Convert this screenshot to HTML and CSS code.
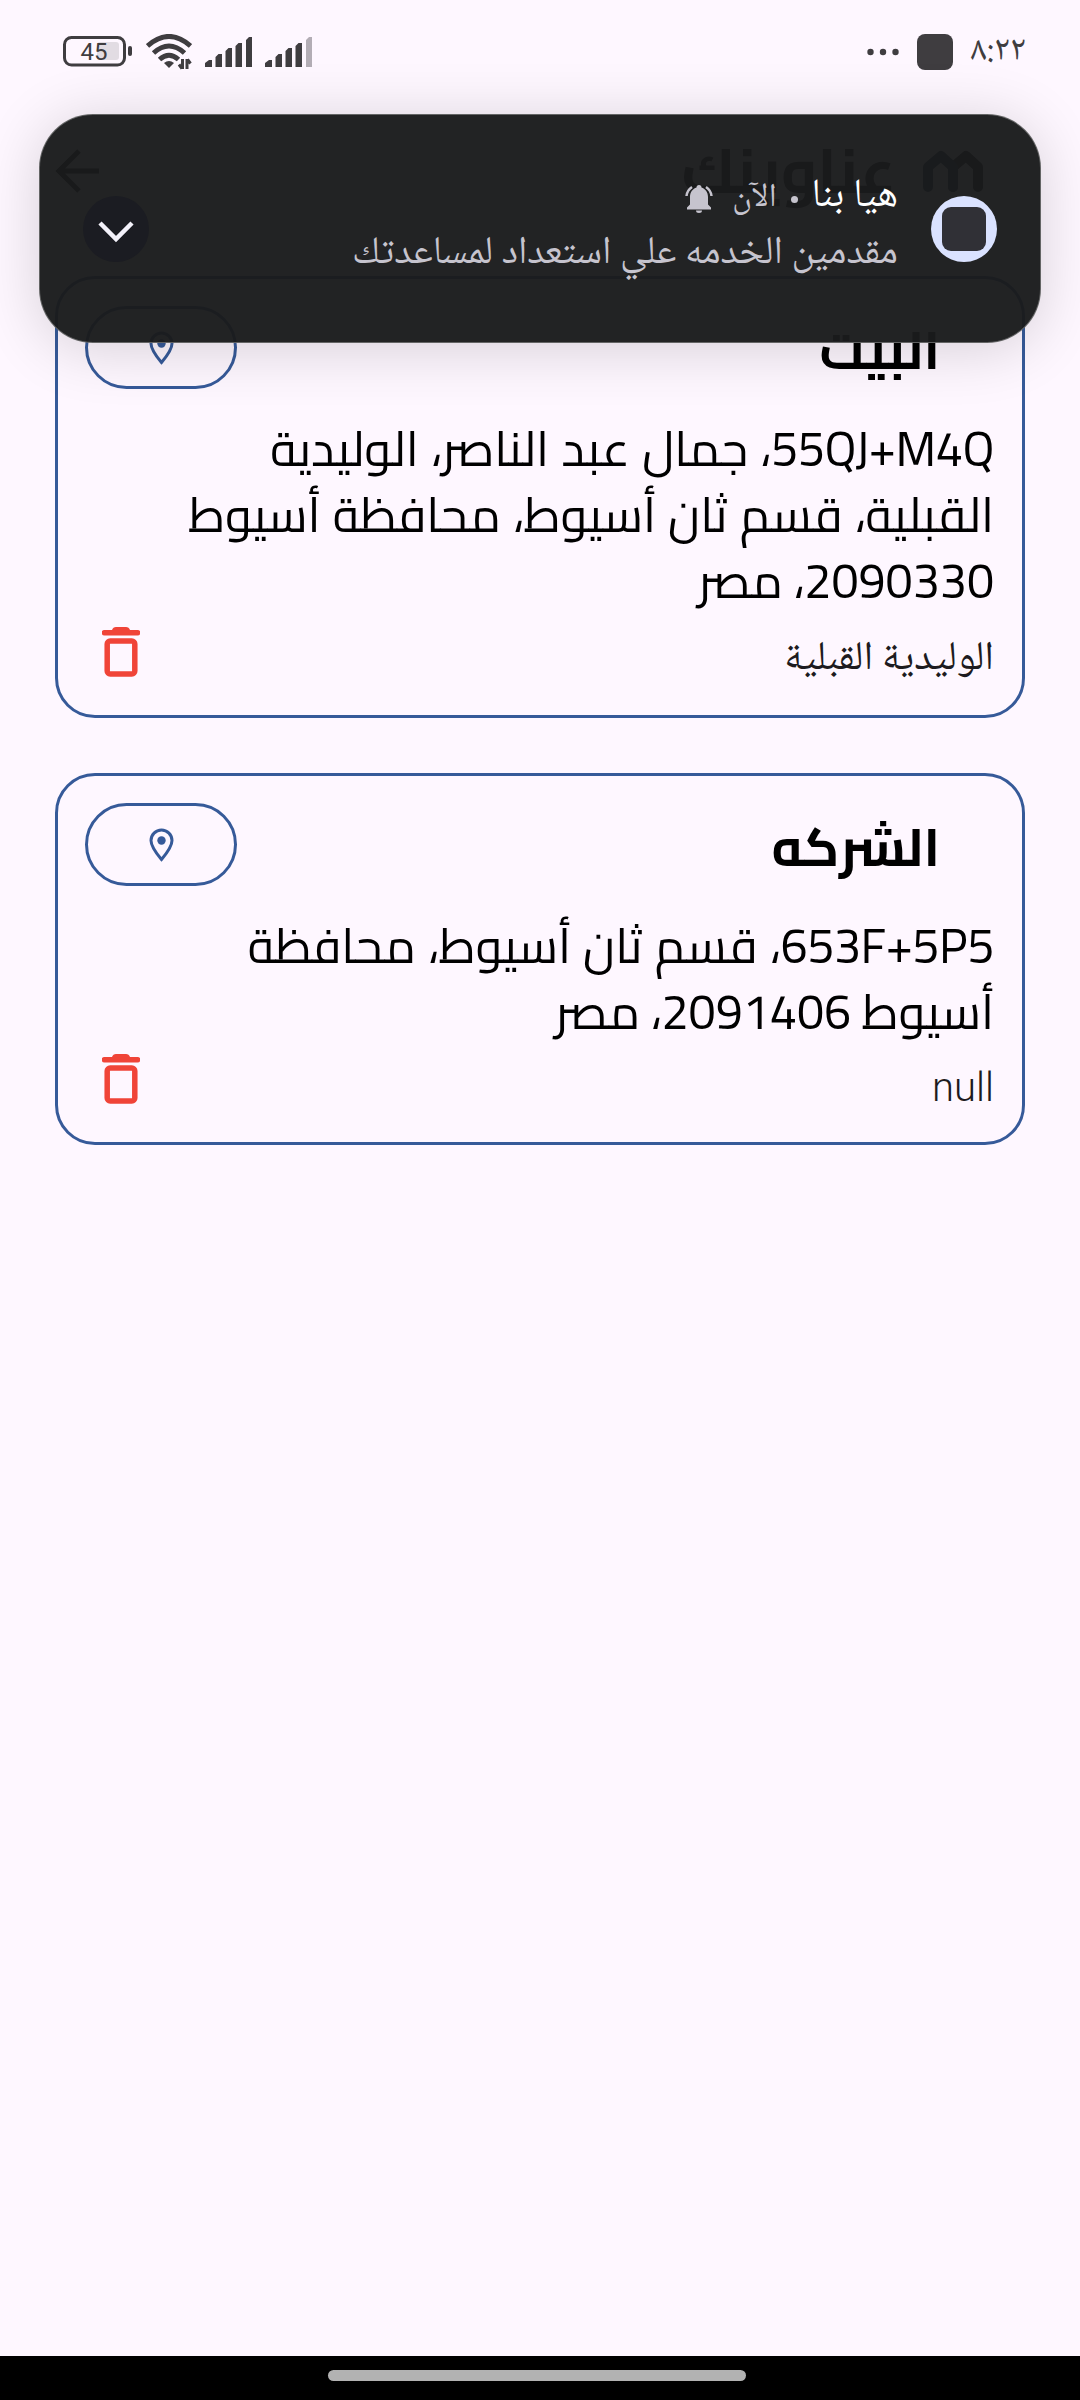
FILE: index.html
```html
<!DOCTYPE html>
<html lang="ar">
<head>
<meta charset="utf-8">
<title>عناوينك</title>
<link rel="stylesheet" href="styles.css">
</head>
<body>
<div class="screen">
  <header class="status">
    <div class="status-side">
      <svg class="battery" width="70" height="32" viewBox="0 0 70 32"><rect x="1.500" y="1.500" width="60" height="27.500" rx="7" fill="none" stroke="#3f3d40" stroke-width="3"/><rect x="34" y="6" width="22" height="18" rx="3" fill="#e2dce3"/><rect x="65" y="10" width="4" height="10" rx="2" fill="#3f3d40"/><text x="31" y="23.500" text-anchor="middle">45</text></svg>
      <svg class="wifi" width="46" height="36" viewBox="0 0 46 36" fill="none" stroke="#3f3d40" stroke-width="5"><path d="M1.500 12Q23-7 44.500 12M7.500 19Q23 5 38.500 19M13.500 25.500Q23 17 32.500 25.500"/><path d="M18 29Q23 25 28 29L23 34z" fill="#3f3d40" stroke="none"/><path d="M36.500 25v10M41 25v10M33 30.500l3 4M44.500 29.500l-3-4" stroke-width="3"/></svg>
      <svg class="signal" width="48" height="31" viewBox="0 0 48 31" fill="#3f3d40"><path d="M0 31v-4l4-3h3v7zM10.500 31V21l3-3H17v13zM20.500 31V15l3-3H27v19zM30.500 31V10l3-3H37v24zM41 31V4l3-3h3v30z"/></svg>
      <svg class="signal" width="48" height="31" viewBox="0 0 48 31" fill="#3f3d40"><path d="M0 31v-4l4-3h3v7zM10.500 31V21l3-3H17v13zM20.500 31V15l3-3H27v19zM30.500 31V10l3-3H37v24z"/><path d="M41 31V4l3-3h3v30z" fill="#b3adb5"/></svg>
    </div>
    <div class="status-side status-end">
      <svg width="32" height="8" viewBox="0 0 32 8" fill="#3f3d40"><circle cx="3.500" cy="4" r="3.200"/><circle cx="16" cy="4" r="3.200"/><circle cx="28.500" cy="4" r="3.200"/></svg>
      <span class="status-app"></span>
      <span class="clock">٨:٢٢</span>
    </div>
  </header>

  <div class="appbar">
    <svg width="44" height="44" viewBox="0 0 44 44" fill="none" stroke="#000" stroke-width="5"><path d="M44 22H4M24 2L4 22l20 20"/></svg>
    <div class="brand">
      <h1 dir="rtl">عناوينك</h1>
      <svg width="60" height="42" viewBox="0 0 60 42" fill="none" stroke-width="10" stroke-linecap="round" stroke-linejoin="round"><path d="M30 37V17L43 6l12 11v20" stroke="#000"/><path d="M5 37V17L18 6l12 11v20" stroke="#0d2b3c"/></svg>
    </div>
  </div>

  <main class="list">
    <section class="card">
      <div class="card-head">
        <button class="pin"><svg width="25" height="34" viewBox="0 0 25 34" fill="none" stroke="#365a99" stroke-width="3"><path d="M12.500 31.500C7 25 2 18.500 2 12.500a10.500 10.500 0 0 1 21 0c0 6-5 12.500-10.500 19z"/><circle cx="12.500" cy="12.500" r="4.200" fill="#365a99" stroke="none"/></svg></button>
        <h2 dir="rtl">البيت</h2>
      </div>
      <p class="address" dir="rtl"><span class="line wide"><span class="code">55QJ+M4Q</span>، جمال عبد الناصر، الوليدية</span><span class="line wide">القبلية، قسم ثان أسيوط، محافظة أسيوط</span><span class="line"><span class="code">2090330</span>، مصر</span></p>
      <div class="card-foot">
        <svg width="38" height="50" viewBox="0 0 38 50"><path d="M2.500 3H10q1-3 4-3h10q3 0 4 3h7.500a2.500 2.500 0 0 1 0 5.500h-33a2.500 2.500 0 0 1 0-5.500z" fill="#f04438"/><rect x="5.200" y="14" width="27.600" height="33" rx="3" fill="none" stroke="#f04438" stroke-width="5.500"/></svg>
        <span class="area" dir="rtl">الوليدية القبلية</span>
      </div>
    </section>
    <section class="card short">
      <div class="card-head">
        <button class="pin"><svg width="25" height="34" viewBox="0 0 25 34" fill="none" stroke="#365a99" stroke-width="3"><path d="M12.500 31.500C7 25 2 18.500 2 12.500a10.500 10.500 0 0 1 21 0c0 6-5 12.500-10.500 19z"/><circle cx="12.500" cy="12.500" r="4.200" fill="#365a99" stroke="none"/></svg></button>
        <h2 dir="rtl">الشركه</h2>
      </div>
      <p class="address" dir="rtl"><span class="line wide"><span class="code">653F+5P5</span>، قسم ثان أسيوط، محافظة</span><span class="line">أسيوط <span class="code">2091406</span>، مصر</span></p>
      <div class="card-foot">
        <svg width="38" height="50" viewBox="0 0 38 50"><path d="M2.500 3H10q1-3 4-3h10q3 0 4 3h7.500a2.500 2.500 0 0 1 0 5.500h-33a2.500 2.500 0 0 1 0-5.500z" fill="#f04438"/><rect x="5.200" y="14" width="27.600" height="33" rx="3" fill="none" stroke="#f04438" stroke-width="5.500"/></svg>
        <span class="area latin">null</span>
      </div>
    </section>
  </main>

  <footer class="navbar"><span class="handle"></span></footer>

  <aside class="toast">
    <svg class="expand" width="66" height="66" viewBox="0 0 66 66"><circle cx="33" cy="33" r="33" fill="#1b1c22"/><path d="M17 27l16 16 16-16" fill="none" stroke="#f3f1fa" stroke-width="4.500"/></svg>
    <div class="toast-text" dir="rtl">
      <div class="toast-title"><b>هيا بنا</b><i></i><span>الآن</span>
        <svg class="bell" width="28" height="28" viewBox="0 0 28 28" fill="#c6c4ce"><path d="M2 24.500v-2l3-3V12c0-5 3-8.500 6.500-9.500a2.400 2.400 0 0 1 5 0C20 3.500 23 7 23 12v7.500l3 3v2zM11 25.500h6a3 2.500 0 0 1-6 0z"/><path d="M7 2Q2 5.500 1.500 11M21 2q5 3.500 5.500 9" fill="none" stroke="#c6c4ce" stroke-width="2.500"/></svg>
      </div>
      <div class="toast-body">مقدمين الخدمه علي استعداد لمساعدتك</div>
    </div>
    <span class="avatar"><span></span></span>
  </aside>
</div>
</body>
</html>
```
FILE: styles.css
```css
* { box-sizing: border-box; }
body { margin: 0; background: #fef7ff; }
h1, h2, p { margin: 0; }
.screen { position: relative; width: 1080px; height: 2400px; overflow: hidden; display: flex; flex-direction: column; background: #fef7ff; font-family: "Noto Naskh Arabic", "Noto Sans Arabic", sans-serif; color: #000; }
.status { height: 103px; display: flex; justify-content: space-between; align-items: center; padding: 0 54px 0 63px; }
.status-side { display: flex; align-items: center; }
.battery { margin-right: 13px; }
.battery text { font: 24px Roboto, sans-serif; fill: #3f3d40; }
.wifi { margin-right: 13px; }
.signal { margin-right: 12px; }
.status-end { gap: 18px; color: #3f3d40; }
.status-app { width: 36px; height: 36px; border-radius: 8px; background: #3f3d40; }
.clock { font-size: 35.5px; line-height: 40px; padding-top: 2px; }
.appbar { height: 173px; display: flex; justify-content: space-between; align-items: center; padding: 0 97px 37px 55px; }
.brand { display: flex; align-items: center; gap: 27px; }
.brand h1 { font-family: Cairo, sans-serif; font-size: 62.5px; line-height: 70px; }
.list { flex: 1; padding: 0 55px; display: flex; flex-direction: column; gap: 55px; }
.card { height: 442px; flex: none; border: 3px solid #365a99; border-radius: 40px; padding: 27px 28px 38px 27px; display: flex; flex-direction: column; }
.card.short { height: 372px; }
.card-head { display: flex; justify-content: space-between; align-items: center; height: 83px; padding-right: 54px; }
.card-head h2 { font-family: Cairo, sans-serif; font-size: 53px; line-height: 60px; padding-top: 4px; }
.pin { width: 152px; height: 83px; border: 3px solid #365a99; border-radius: 42px; background: none; padding: 0; display: grid; place-items: center; }
.address { padding-top: 27px; font-family: Cairo, sans-serif; font-size: 48.4px; flex: 1; }
.line { display: block; height: 66px; line-height: 66px; white-space: nowrap; }
.line.wide { word-spacing: 1.5px; }
.code { letter-spacing: -.4px; }
.card-foot { display: flex; justify-content: space-between; align-items: flex-end; padding-left: 17px; height: 50px; }
.area { font-size: 40.6px; line-height: 50px; color: #1d1b20; margin-bottom: -9px; }
.area.latin { font-family: Roboto, sans-serif; font-weight: 300; font-size: 40px; }
.navbar { height: 44px; flex: none; background: #000; display: flex; justify-content: center; padding: 14px 6px 0 0; }
.handle { width: 418px; height: 11px; border-radius: 6px; background: #b2b2b2; }
.toast { position: absolute; left: 39px; top: 114px; width: 1002px; height: 229px; border-radius: 54px; background: rgba(26, 27, 28, .964); border: 1px solid rgba(255, 255, 255, .3); box-shadow: 0 6px 60px rgba(0, 0, 0, .16); display: flex; justify-content: space-between; align-items: center; padding: 0 43px; }
.toast-text { flex: 1; margin-right: 33px; padding-bottom: 2px; color: #c6c4ce; }
.toast-title { display: flex; align-items: center; gap: 14px; font-size: 33px; height: 54px; }
.toast-title b { font-size: 40px; font-weight: 400; color: #fff; padding-bottom: 4px; }
.toast-title i { width: 7px; height: 7px; border-radius: 50%; background: #c6c4ce; }
.bell { margin-right: 5px; }
.toast-body { font-size: 39.2px; line-height: 57px; white-space: nowrap; }
.avatar { width: 66px; height: 66px; border-radius: 50%; background: #dae2ff; display: grid; place-items: center; }
.avatar span { width: 44px; height: 44px; border-radius: 9px; background: #303036; }
```
